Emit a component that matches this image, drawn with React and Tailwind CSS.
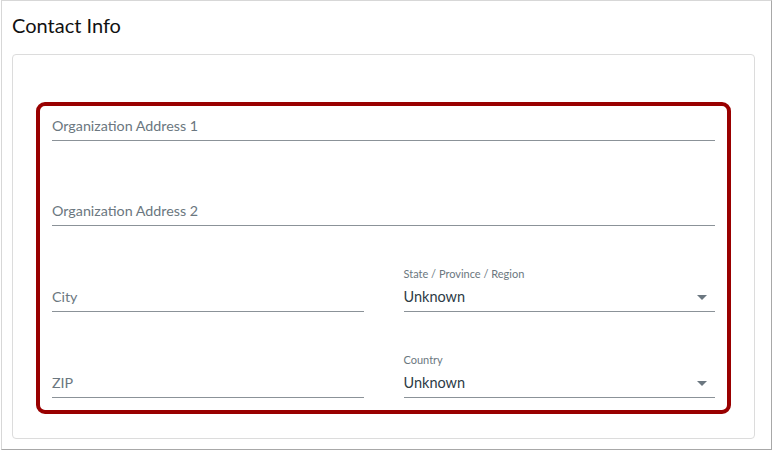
function Caret() {
  return (
    <svg width="10" height="5" viewBox="0 0 10 5" className="shrink-0">
      <path d="M0 0 L10 0 L5 5 Z" fill="#6b7780" />
    </svg>
  );
}

function TextField({ placeholder, label, hasLabelRow = true }) {
  return (
    <div className="flex flex-col">
      {hasLabelRow ? (
        <div className="flex h-[27px] items-end pb-[2px] text-[11px] leading-[14px] text-[#6b7780]">{label}</div>
      ) : null}
      <div className="flex h-[29px] items-center border-b border-[#8b9298] text-[14.3px] text-[#6b7780]">
        {placeholder}
      </div>
    </div>
  );
}

function SelectField({ label, value }) {
  return (
    <div className="flex flex-col">
      <div className="flex h-[27px] items-end pb-[2px] text-[11px] leading-[14px] text-[#6b7780]">{label}</div>
      <div className="flex h-[29px] items-center justify-between border-b border-[#8b9298] pr-[8px] text-[14.5px] text-[#2d3b45]">
        <span>{value}</span>
        <Caret />
      </div>
    </div>
  );
}

export default function App() {
  return (
    <div className="h-[452px] w-[774px] bg-white font-['Lato',sans-serif]">
      <div className="ml-[1px] h-[450px] w-[771px] border border-[#d7d7d7] border-r-[#a8a8a8] border-b-[#a8a8a8] px-[10px] pt-[11px]">
        <h1 className="text-[20px] leading-[26px] text-[#111]">Contact Info</h1>
        <div className="mt-[16px] h-[385px] w-[743px] rounded-[4px] border border-[#dcdcdc] pl-[23px] pt-[47px]">
          <div className="w-[695px] rounded-[9px] border-[4px] border-[#990000] px-[12px] pb-[12px] pt-[6px]">
            <div className="flex flex-col">
              <TextField placeholder="Organization Address 1" hasLabelRow={false} />
              <div className="mt-[29px]">
                <TextField placeholder="Organization Address 2" />
              </div>
              <div className="mt-[30px] grid grid-cols-2 gap-x-[40px]">
                <TextField placeholder="City" />
                <SelectField label="State / Province / Region" value="Unknown" />
              </div>
              <div className="mt-[30px] grid grid-cols-2 gap-x-[40px]">
                <TextField placeholder="ZIP" />
                <SelectField label="Country" value="Unknown" />
              </div>
            </div>
          </div>
        </div>
      </div>
    </div>
  );
}
